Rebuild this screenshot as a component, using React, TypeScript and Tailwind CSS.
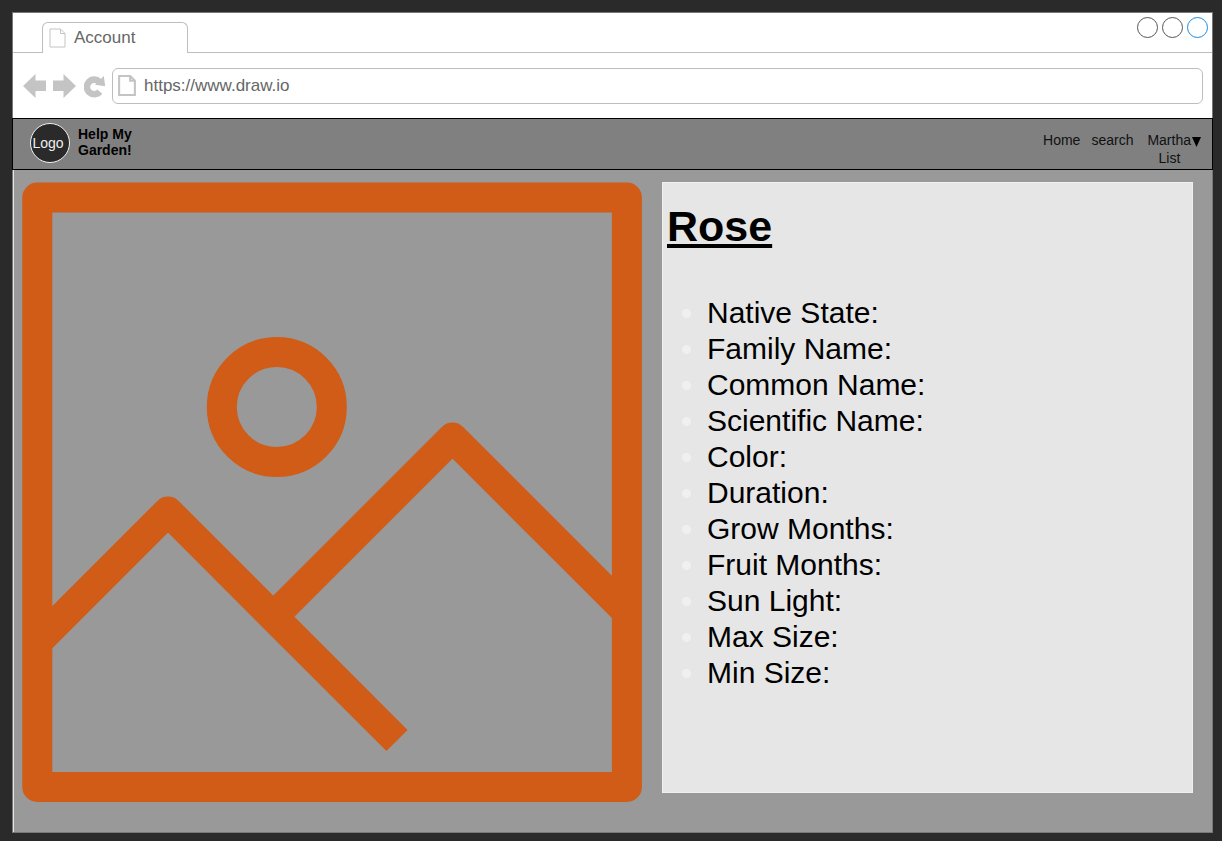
const traits = [
  'Native State:',
  'Family Name:',
  'Common Name:',
  'Scientific Name:',
  'Color:',
  'Duration:',
  'Grow Months:',
  'Fruit Months:',
  'Sun Light:',
  'Max Size:',
  'Min Size:',
];

function PageIcon({ className, stroke }: { className: string; stroke: number }) {
  return (
    <svg viewBox="0 0 17 20" className={className} fill="none" stroke="#c4c4c4" strokeWidth={stroke} aria-hidden="true">
      <path d="M1 1H11.5L16 5.5V19H1Z" />
      <path d="M11.5 1V5.5H16" />
    </svg>
  );
}

function BrowserChrome() {
  return (
    <header className="bg-white text-[17px] text-[#666666]">
      <div className="flex h-10 items-end">
        <div className="w-[29px] self-stretch border-b border-[#bdbdbd]" />
        <button className="flex h-[31px] w-[146px] items-center gap-2 rounded-t-md border border-b-0 border-[#bdbdbd] pl-[6px] leading-5">
          <PageIcon className="h-5 w-[17px]" stroke={1} />
          Account
        </button>
        <div className="flex flex-1 items-start justify-end gap-1 self-stretch border-b border-[#bdbdbd] pt-1 pr-1">
          <button aria-label="Minimize" className="size-[21px] rounded-full border border-[#555555]" />
          <button aria-label="Maximize" className="size-[21px] rounded-full border border-[#555555]" />
          <button aria-label="Close" className="size-[21px] rounded-full border border-[#1a8ae0]" />
        </div>
      </div>
      <div className="flex h-[65px] items-center pr-[9px] pl-[10px]">
        <button aria-label="Back">
          <svg viewBox="0 0 23 24" className="h-6 w-[23px]" fill="#c4c4c4">
            <path d="M0 12L12.5 0V6.5H23V17H12.5V24Z" />
          </svg>
        </button>
        <button aria-label="Forward" className="ml-[7px]">
          <svg viewBox="0 0 23 24" className="h-6 w-[23px]" fill="#c4c4c4">
            <path d="M23 12L10.5 0V6.5H0V17H10.5V24Z" />
          </svg>
        </button>
        <button aria-label="Reload" className="ml-2">
          <svg viewBox="0 0 22 24" className="h-6 w-[22px]" fill="none">
            <path d="M15.4 7.8A7.3 7.3 0 1 0 15.8 17.7" stroke="#c4c4c4" strokeWidth="6.6" />
            <path d="M19.8 2L21.2 12.2L11 10.800Z" fill="#c4c4c4" />
          </svg>
        </button>
        <label className="ml-[6px] flex h-9 flex-1 items-center gap-2 rounded-md border border-[#bdbdbd] pl-[5px]">
          <PageIcon className="h-[21px] w-[18px]" stroke={2} />
          <input
            aria-label="Address"
            defaultValue="https://www.draw.io"
            className="min-w-0 flex-1 bg-transparent leading-5 outline-none"
          />
        </label>
      </div>
    </header>
  );
}

function SiteNav() {
  return (
    <nav className="-mx-px flex h-[52px] items-start border border-black bg-[#808080] pr-[11px] pl-[17px] text-sm text-[#111111]">
      <a href="#home" className="mt-1 flex items-start gap-2 text-black">
        <span className="flex size-10 items-center justify-center rounded-full border border-[#f0f0f0] bg-[#2a2a2a] pr-1 text-[#f0f0f0]">
          Logo
        </span>
        <span className="mt-[3px] w-16 leading-4 font-bold">Help My Garden!</span>
      </a>
      <div className="mt-3 ml-auto flex leading-[18px]">
        <a href="#home">Home</a>
        <a href="#search" className="ml-[11px]">search</a>
        <div className="ml-[14px] flex flex-col items-start">
          <button className="flex items-center gap-px">
            Martha
            <svg viewBox="0 0 9 10" className="mt-1 h-[10px] w-[9px]" fill="black" aria-hidden="true">
              <path d="M0 0H9L4.5 10Z" />
            </svg>
          </button>
          <a href="#list" className="w-11 text-center">List</a>
        </div>
      </div>
    </nav>
  );
}

function PlantPicture() {
  return (
    <svg
      viewBox="0 0 620 620"
      className="w-full"
      role="img"
      aria-label="Picture of the plant"
      fill="none"
      stroke="#d05c17"
      strokeWidth="30"
      strokeLinejoin="round"
    >
      <rect x="15.3" y="15.5" width="589.6" height="589.5" />
      <circle cx="254.8" cy="225" r="55" />
      <path d="M16 459.5L146 329.5L375 558.5" />
      <path d="M251.25 434.75L430.5 255.5L605 430" />
    </svg>
  );
}

export default function App() {
  return (
    <div className="flex min-h-screen flex-col bg-[#2a2a2a] pt-3 pr-[9px] pb-2 pl-3 font-['Liberation_Sans',Arial,sans-serif]">
      <div className="flex flex-1 flex-col border border-[#777777] bg-[#999999]">
        <BrowserChrome />
        <SiteNav />
        <main className="grid flex-1 grid-cols-[620fr_531fr] items-start gap-5 border-l border-[#e6e6e6] pt-3 pr-[19px] pb-[30px] pl-2">
          <PlantPicture />
          <section className="border border-[#f0f0f0] bg-[#e6e6e6] px-1 pt-[18px] pb-[101px] text-black">
            <h1 className="text-[43px] leading-[50px] font-bold underline decoration-4 underline-offset-3">Rose</h1>
            <ul className="mt-11 list-disc pl-10 text-3xl leading-9 marker:text-[#f0f0f0]">
              {traits.map((trait) => (
                <li key={trait}>{trait}</li>
              ))}
            </ul>
          </section>
        </main>
      </div>
    </div>
  );
}
